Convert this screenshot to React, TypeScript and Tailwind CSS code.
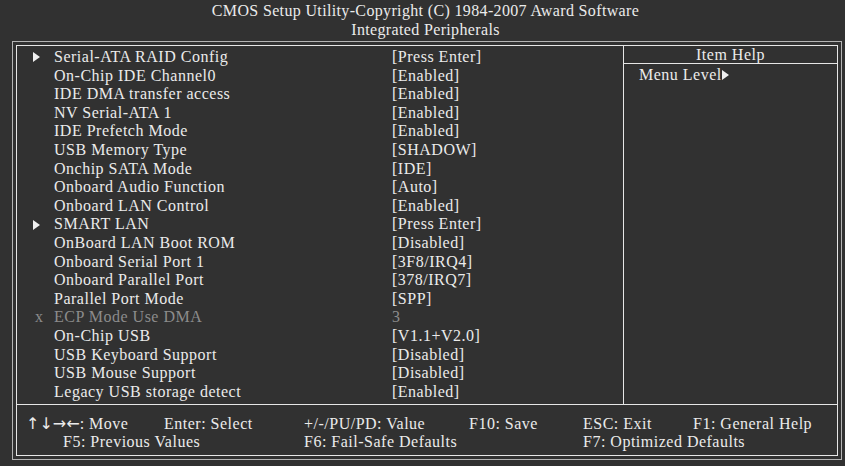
const rows: { mark?: "sub" | "x"; label: string; value: string; dim?: boolean }[] = [
  { mark: "sub", label: "Serial-ATA RAID Config", value: "[Press Enter]" },
  { label: "On-Chip IDE Channel0", value: "[Enabled]" },
  { label: "IDE DMA transfer access", value: "[Enabled]" },
  { label: "NV Serial-ATA 1", value: "[Enabled]" },
  { label: "IDE Prefetch Mode", value: "[Enabled]" },
  { label: "USB Memory Type", value: "[SHADOW]" },
  { label: "Onchip SATA Mode", value: "[IDE]" },
  { label: "Onboard Audio Function", value: "[Auto]" },
  { label: "Onboard LAN Control", value: "[Enabled]" },
  { mark: "sub", label: "SMART LAN", value: "[Press Enter]" },
  { label: "OnBoard LAN Boot ROM", value: "[Disabled]" },
  { label: "Onboard Serial Port 1", value: "[3F8/IRQ4]" },
  { label: "Onboard Parallel Port", value: "[378/IRQ7]" },
  { label: "Parallel Port Mode", value: "[SPP]" },
  { mark: "x", label: "ECP Mode Use DMA", value: "3", dim: true },
  { label: "On-Chip USB", value: "[V1.1+V2.0]" },
  { label: "USB Keyboard Support", value: "[Disabled]" },
  { label: "USB Mouse Support", value: "[Disabled]" },
  { label: "Legacy USB storage detect", value: "[Enabled]" },
];

function Tri({ className = "" }: { className?: string }) {
  return (
    <svg width="7" height="10" viewBox="0 0 7 10" className={className}>
      <polygon points="0,0 7,5 0,10" fill="#f0f0f0" />
    </svg>
  );
}

export default function App() {
  return (
    <div
      className="w-[845px] h-[466px] bg-[#313131] text-[#ebebeb] text-[16px] tracking-[0.5px] overflow-hidden"
      style={{ fontFamily: '"Liberation Serif", "Times New Roman", serif' }}
    >
      {/* header */}
      <div className="h-[41px] pt-[1px] pl-[6px] text-center leading-[19px] tracking-[0.35px]">
        <div>CMOS Setup Utility-Copyright (C) 1984-2007 Award Software</div>
        <div>Integrated Peripherals</div>
      </div>

      <div className="ml-[12px] mr-[3px] h-[419px] border border-[#b4b4b4] p-[3px]">
        <div className="h-full border border-[#e6e6e6] flex flex-col">
          <div className="flex h-[359px] border-b border-[#e6e6e6]">
            <div className="w-[606px] pt-[2px] pl-[16px]">
              {rows.map((r) => (
                <div
                  key={r.label}
                  className={`flex items-center leading-[18.6px] ${r.dim ? "text-[#8c8c8c]" : ""}`}
                >
                  <span className="w-[21px] flex items-center">
                    {r.mark === "sub" && <Tri />}
                    {r.mark === "x" && <span className="ml-[2px]">x</span>}
                  </span>
                  <span className="w-[338px]">{r.label}</span>
                  <span>{r.value}</span>
                </div>
              ))}
            </div>
            <div className="flex-1 border-l border-[#e6e6e6]">
              <div className="h-[18px] border-b border-[#e6e6e6] text-center leading-[18px]">Item Help</div>
              <div className="pl-[15px] pt-[2px] leading-[18px] flex items-center">
                Menu Level
                <Tri />
              </div>
            </div>
          </div>

          <div className="pt-[10px] leading-[18px]">
            <div className="flex pl-[9px]">
              <span className="w-[138px]">
                <span className="tracking-normal" style={{ fontFamily: '"DejaVu Sans", sans-serif' }}>↑↓→←</span>: Move
              </span>
              <span className="w-[140px]">Enter: Select</span>
              <span className="w-[165px]">+/-/PU/PD: Value</span>
              <span className="w-[114px]">F10: Save</span>
              <span className="w-[110px]">ESC: Exit</span>
              <span>F1: General Help</span>
            </div>
            <div className="flex pl-[46px]">
              <span className="w-[241px]">F5: Previous Values</span>
              <span className="w-[279px]">F6: Fail-Safe Defaults</span>
              <span>F7: Optimized Defaults</span>
            </div>
          </div>
        </div>
      </div>
    </div>
  );
}
